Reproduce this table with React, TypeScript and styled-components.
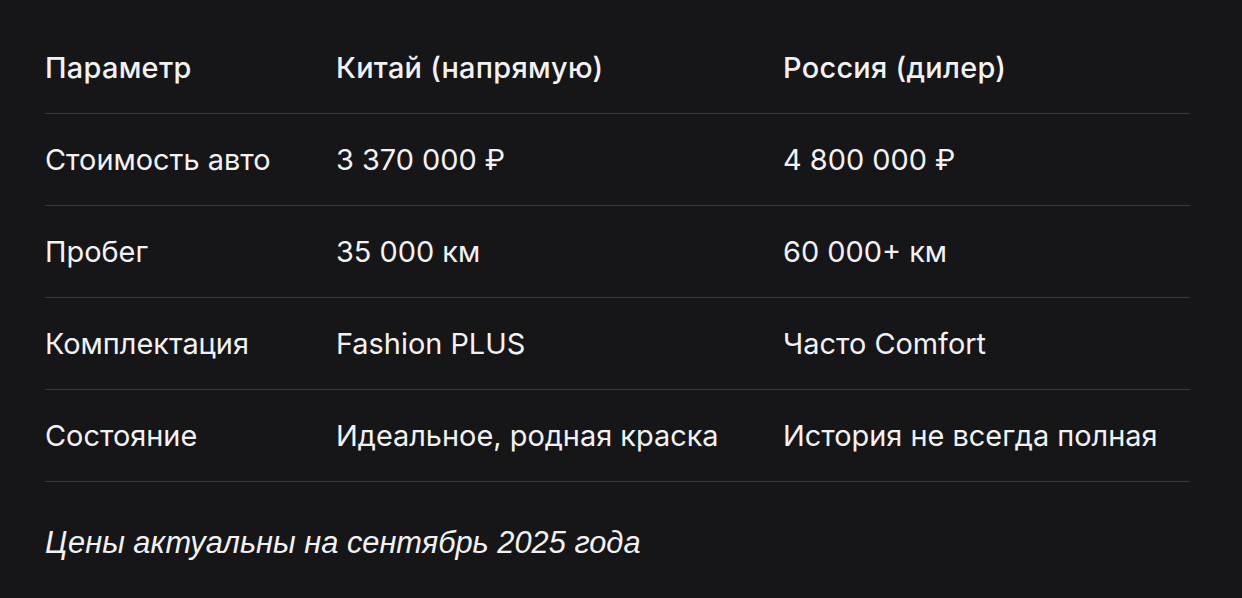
import React from 'react'
import styled, { createGlobalStyle } from 'styled-components'

const GlobalStyle = createGlobalStyle`
  html, body {
    margin: 0;
    padding: 0;
    background: #161618;
  }
  body {
    font-family: Inter, "Noto Sans", sans-serif;
    color: #f2f2f4;
  }
`

interface Row {
  param: string
  china: string
  russia: string
}

const rows: Row[] = [
  { param: 'Стоимость авто', china: '3 370 000 ₽', russia: '4 800 000 ₽' },
  { param: 'Пробег', china: '35 000 км', russia: '60 000+ км' },
  { param: 'Комплектация', china: 'Fashion PLUS', russia: 'Часто Comfort' },
  { param: 'Состояние', china: 'Идеальное, родная краска', russia: 'История не всегда полная' }
]

const App: React.FC = () => {
  return (
    <>
      <GlobalStyle />
      <Page>
        <Table>
          <TableRow>
            <HeadCell>Параметр</HeadCell>
            <HeadCell>Китай (напрямую)</HeadCell>
            <HeadCell>Россия (дилер)</HeadCell>
          </TableRow>
          {rows.map(row => (
            <TableRow key={row.param}>
              <Cell>{row.param}</Cell>
              <Cell>{row.china}</Cell>
              <Cell>{row.russia}</Cell>
            </TableRow>
          ))}
        </Table>
        <Note>Цены актуальны на сентябрь 2025 года</Note>
      </Page>
    </>
  )
}

export default App

const Page = styled.div`
  width: 1242px;
  height: 598px;
  box-sizing: border-box;
  padding: 22px 52px 0 45px;
  background: #161618;
`

const Table = styled.div`
  display: flex;
  flex-direction: column;
`

const TableRow = styled.div`
  display: grid;
  grid-template-columns: 291px 447px 1fr;
  align-items: center;
  height: 91px;
  border-bottom: 1px solid #38383b;
`

const Cell = styled.div`
  font-size: 28.9px;
  font-weight: 400;
  white-space: nowrap;
`

const HeadCell = styled(Cell)`
  font-weight: 500;
  letter-spacing: 0.3px;
`

const Note = styled.p`
  margin: 43px 0 0;
  font-family: "Liberation Sans", Arial, sans-serif;
  font-style: italic;
  font-size: 30.8px;
  line-height: 36px;
`
